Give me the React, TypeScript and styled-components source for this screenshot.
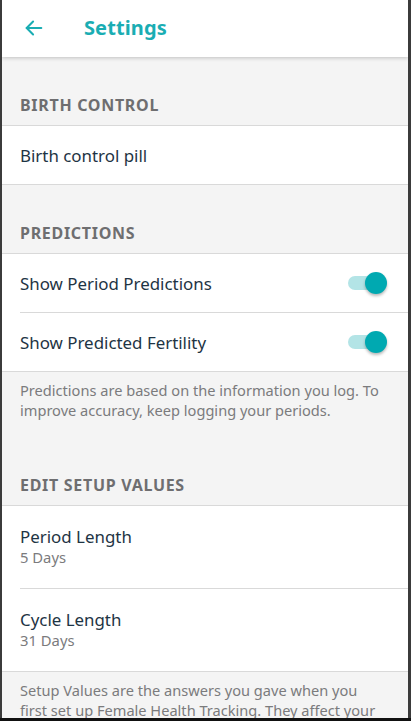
import React from "react";
import styled, { createGlobalStyle } from "styled-components";

const Global = createGlobalStyle`
  html, body { margin: 0; padding: 0; background: #111; }
  body { font-family: "Noto Sans", Lato, "Liberation Sans", sans-serif; -webkit-font-smoothing: antialiased; }
  #root { width: 411px; height: 721px; overflow: hidden; }
`;

const Frame = styled.div`
  width: 411px;
  height: 718px;
  box-sizing: border-box;
  border-left: 2px solid #3b3b3b;
  border-right: 3px solid #3b3b3b;
  background: #f4f4f4;
  overflow: hidden;
  display: flex;
  flex-direction: column;
`;

const Header = styled.header`
  height: 57px;
  flex-shrink: 0;
  background: #fff;
  display: flex;
  align-items: center;
  padding-left: 21px;
  padding-bottom: 2px;
  box-sizing: border-box;
  gap: 39px;
  box-shadow: 0 1px 4px rgba(0, 0, 0, 0.22);
  position: relative;
  z-index: 1;
`;

const Title = styled.h1`
  margin: 0;
  font-size: 20px;
  font-weight: 700;
  color: #1aadb3;
  letter-spacing: 0.1px;
`;

const SectionHead = styled.div<{ $top: number }>`
  padding: ${(p) => p.$top}px 18px 10px 18px;
  line-height: 20px;
  font-size: 16px;
  font-weight: 700;
  color: #6e6e70;
  letter-spacing: 0.7px;
  border-bottom: 1px solid #d9d9d9;
`;

const Group = styled.div`
  background: #fff;
  border-bottom: 1px solid #d9d9d9;
`;

const Row = styled.div<{ $h: number; $divider?: boolean }>`
  height: ${(p) => p.$h}px;
  margin-left: 18px;
  padding-right: 25px;
  display: flex;
  align-items: center;
  justify-content: space-between;
  border-bottom: ${(p) => (p.$divider ? "1px solid #d9d9d9" : "none")};
`;

const Texts = styled.div`
  display: flex;
  flex-direction: column;
  gap: 0;
  line-height: 20px;
`;

const Label = styled.span`
  font-size: 16.9px;
  color: #1e3444;
`;

const Sub = styled.span`
  font-size: 14.8px;
  color: #7b7b7d;
`;

const Note = styled.p`
  margin: 0;
  padding: 9px 20px 0 18px;
  font-size: 14.6px;
  line-height: 19.5px;
  color: #7b7b7d;
`;

const Track = styled.div`
  position: relative;
  width: 33px;
  height: 14px;
  border-radius: 7px;
  background: #b3e4e6;
  margin-right: 2px;
`;

const Knob = styled.div`
  position: absolute;
  right: -6px;
  top: -4px;
  width: 22px;
  height: 22px;
  border-radius: 50%;
  background: #00a9b1;
  box-shadow: 0 2px 3px rgba(0, 0, 0, 0.28);
`;

const Toggle = () => (
  <Track>
    <Knob />
  </Track>
);

const Back = () => (
  <svg width="22" height="22" viewBox="0 0 24 24" fill="none" stroke="#1aadb3" strokeWidth="2.2" strokeLinecap="round" strokeLinejoin="round">
    <path d="M20 12H4" />
    <path d="M11 5l-7 7 7 7" />
  </svg>
);

export default function App() {
  return (
    <>
      <Global />
      <Frame>
        <Header>
          <Back />
          <Title>Settings</Title>
        </Header>
        <SectionHead $top={38}>BIRTH CONTROL</SectionHead>
        <Group>
          <Row $h={58}>
            <Label>Birth control pill</Label>
          </Row>
        </Group>
        <SectionHead $top={38}>PREDICTIONS</SectionHead>
        <Group>
          <Row $h={58} $divider>
            <Label>Show Period Predictions</Label>
            <Toggle />
          </Row>
          <Row $h={58}>
            <Label>Show Predicted Fertility</Label>
            <Toggle />
          </Row>
        </Group>
        <Note>
          Predictions are based on the information you log. To improve accuracy, keep logging your periods.
        </Note>
        <SectionHead $top={55}>EDIT SETUP VALUES</SectionHead>
        <Group>
          <Row $h={82} $divider>
            <Texts>
              <Label>Period Length</Label>
              <Sub>5 Days</Sub>
            </Texts>
          </Row>
          <Row $h={82}>
            <Texts>
              <Label>Cycle Length</Label>
              <Sub>31 Days</Sub>
            </Texts>
          </Row>
        </Group>
        <Note>
          Setup Values are the answers you gave when you first set up Female Health Tracking. They affect your predictions.
        </Note>
      </Frame>
    </>
  );
}
